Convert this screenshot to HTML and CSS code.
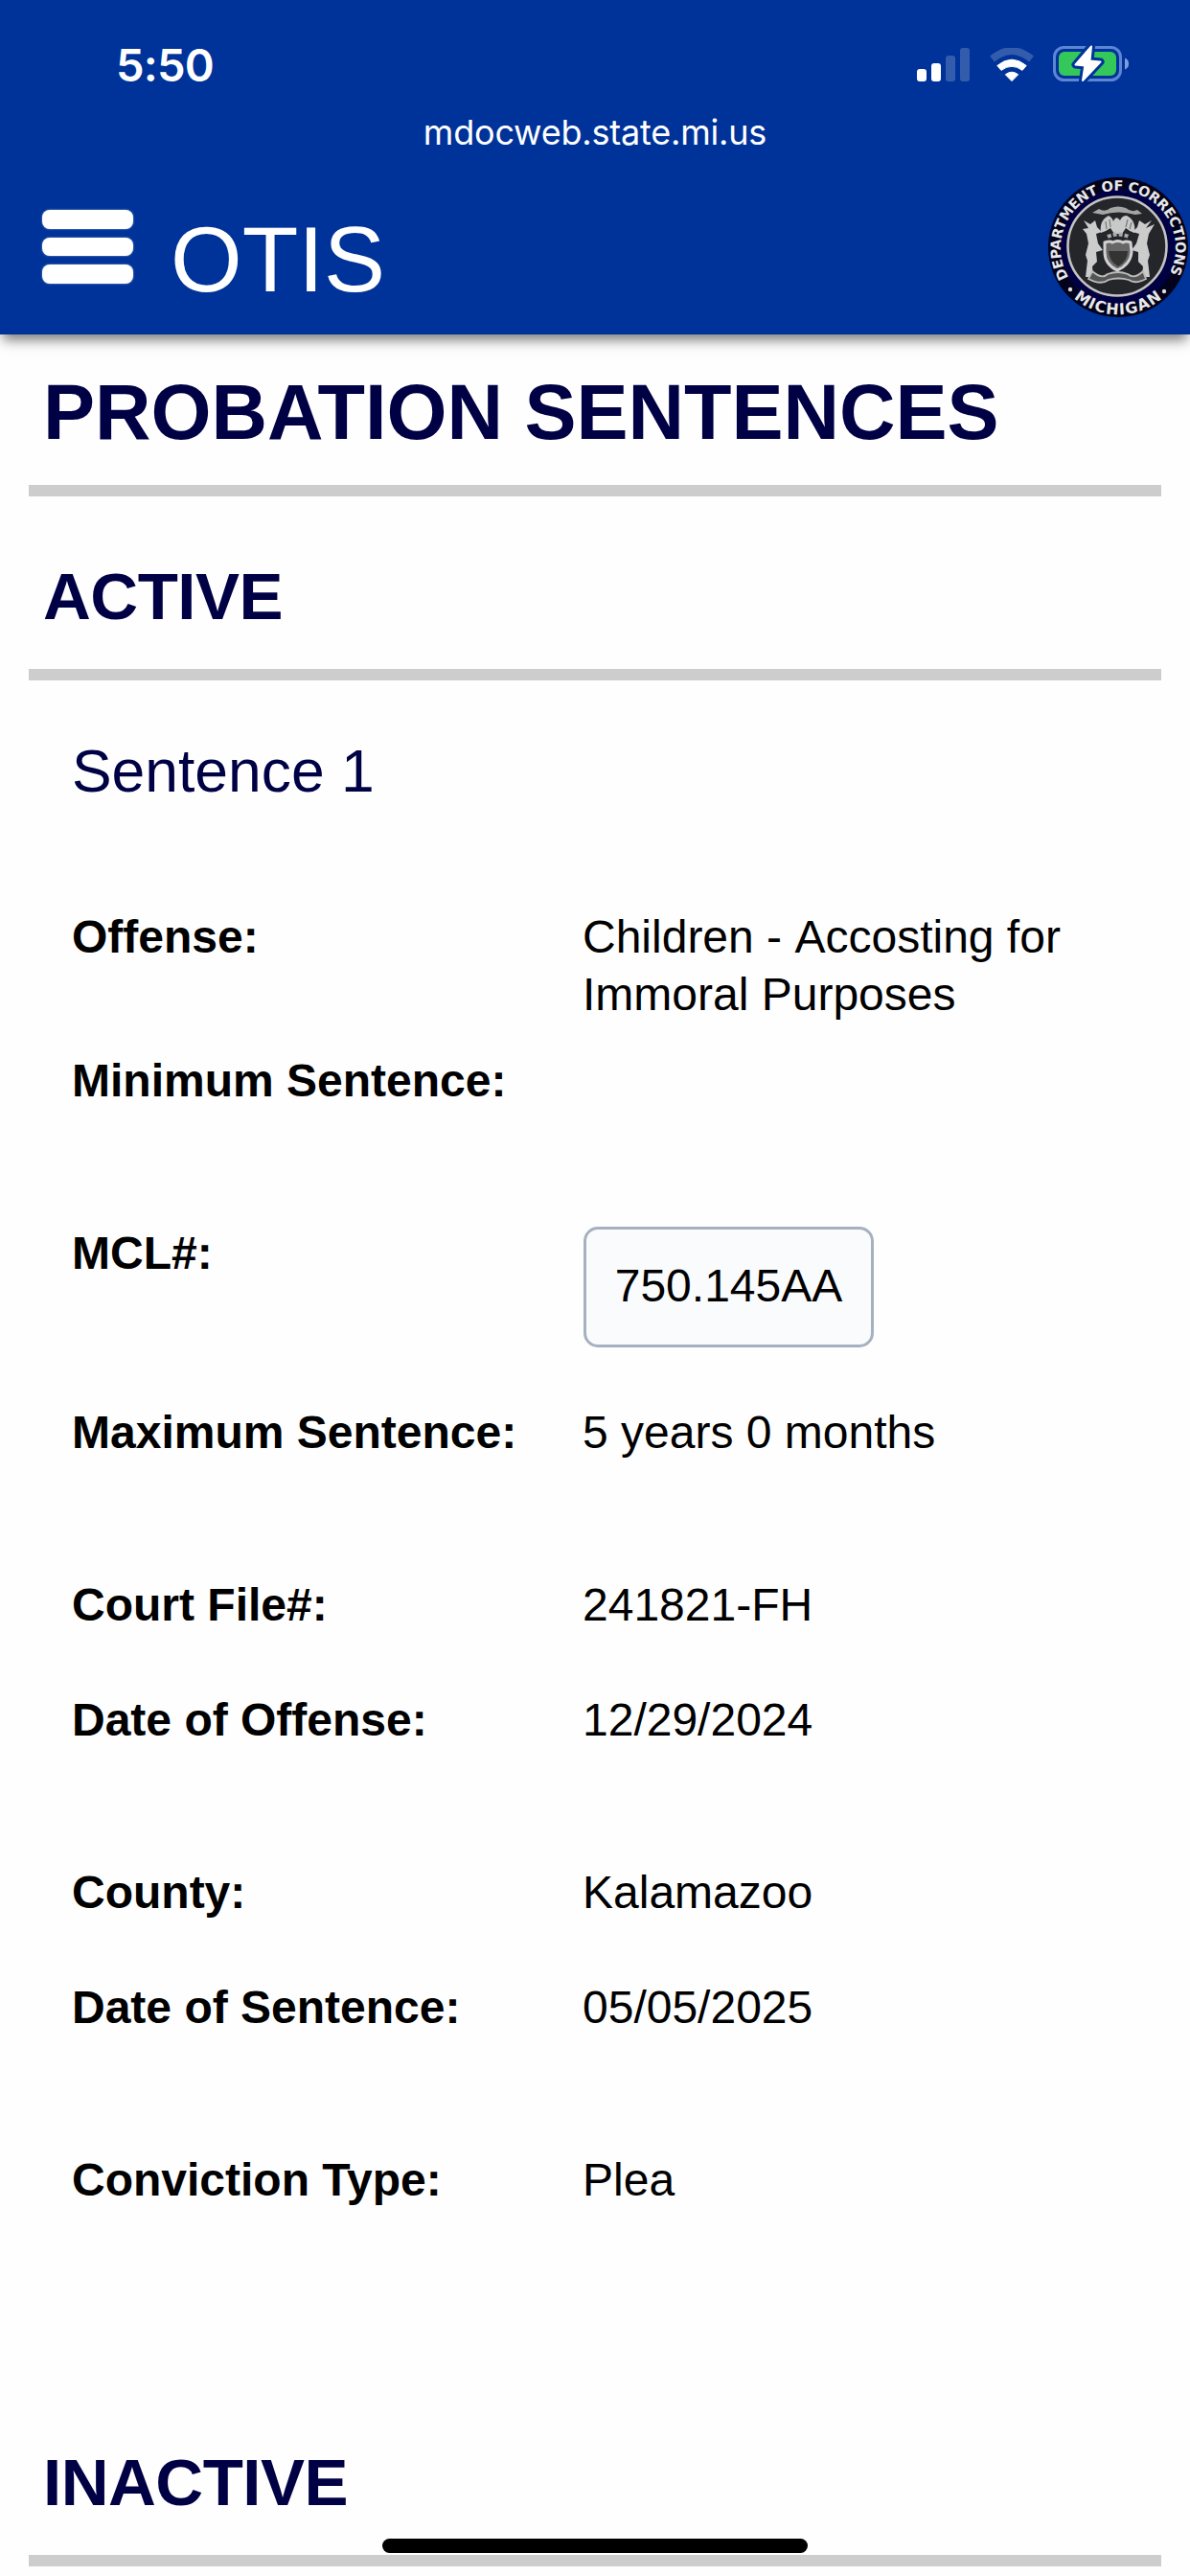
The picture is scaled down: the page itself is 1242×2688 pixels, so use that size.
FILE: index.html
```html
<!DOCTYPE html>
<html lang="en">

<head>
    <meta charset="UTF-8">
    <meta name="viewport" content="width=device-width, initial-scale=1.0">
    <title>OTIS</title>
    <link rel="stylesheet" href="styles.css">
</head>

<body>
    <header class="header">
        <div class="status">
            <span class="time">5:50</span>
            <div class="status-icons">
                <svg class="signal" width="56" height="36" viewBox="0 0 56 36">
                    <rect x="0" y="22" width="10" height="13" rx="3" fill="#fff" />
                    <rect x="15" y="16" width="10" height="19" rx="3" fill="#fff" />
                    <rect x="30" y="8" width="10" height="27" rx="3" fill="#335cad" />
                    <rect x="45" y="0" width="10" height="35" rx="3" fill="#335cad" />
                </svg>
                <svg class="wifi" width="48" height="36" viewBox="0 0 48 36">
                    <path d="M3.5 11.5 Q24 -5.5 44.5 11.5" fill="none" stroke="#335cad" stroke-width="7.5" />
                    <path d="M8.8 18.5 Q24 5.8 39.2 18.5 L35 23.4 Q24 15.2 13 23.4 Z" fill="#fff" stroke="#fff" stroke-width="1" stroke-linejoin="round" />
                    <path d="M17.3 27.8 Q24 22.6 30.7 27.8 L24 34.6 Z" fill="#fff" stroke="#fff" stroke-width="1" stroke-linejoin="round" />
                </svg>
                <svg class="battery" width="82" height="40" viewBox="0 0 82 40">
                    <rect x="1.5" y="3.5" width="69" height="34" rx="10" fill="none" stroke="#5c85d6" stroke-width="3" />
                    <rect x="6" y="8" width="60" height="25" rx="6" fill="#34c759" />
                    <path d="M75 14.5 Q79 16 79 20.5 Q79 25 75 26.5 Z" fill="#7d9ddd" />
                    <path d="M40 2 L23.5 21.5 L33.3 22.5 L31 38 L49.5 18.5 L38.5 17.5 Z" fill="#039" stroke="#039" stroke-width="8" stroke-linejoin="round" />
                    <path d="M40 2.5 L23.5 21.5 L33.3 22.5 L31 38 L49.5 18.5 L38.5 17.5 Z" fill="#fff" stroke="#fff" stroke-width="2" stroke-linejoin="round" />
                </svg>
            </div>
        </div>
        <div class="url">mdocweb.state.mi.us</div>
        <nav class="nav">
            <div class="menu">
                <span></span>
                <span></span>
                <span></span>
            </div>
            <div class="brand">OTIS</div>
            <svg class="seal" width="146" height="150" viewBox="-73 -75 146 150">
                <defs>
                    <path id="arcTop" d="M-51.5 31.5 A60 60 0 1 1 51.5 31.5" />
                    <path id="arcBottom" d="M-54 45 A70.5 70.5 0 0 0 54 45" />
                </defs>
                <circle r="73" fill="#02021c" />
                <circle r="61" fill="#000042" />
                <circle r="51.5" cx="-1" cy="-1" fill="#24262a" stroke="#c4c4c4" stroke-width="2.6" />
                <text class="seal-text"><textPath href="#arcTop" textLength="248">DEPARTMENT OF CORRECTIONS</textPath></text>
                <text class="seal-text seal-state"><textPath href="#arcBottom" startOffset="11" textLength="100">MICHIGAN</textPath></text>
                <circle cx="-50" cy="44" r="2.2" fill="#ddd" />
                <circle cx="48" cy="46" r="2.2" fill="#ddd" />
                <!-- scroll -->
                <path d="M-27 -36 L-20 -40 Q-14 -36 -8 -41 Q0 -44 8 -41 Q14 -36 20 -39 L25 -35 L18 -34 Q0 -39 -16 -34 Z" fill="#a5a5a5" />
                <!-- eagle -->
                <path d="M-18 -15 Q-20 -28 -10 -33 Q-6 -31 -5 -27 Q-2 -34 2 -28 Q4 -33 9 -33 Q19 -28 17 -15 Q11 -17 8 -20 L4 -14 L-4 -14 L-8 -20 Q-12 -17 -18 -15 Z" fill="#c9c9c9" />
                <path d="M-13 -27 L-12 -19 M-9 -29 L-8 -21 M10 -29 L8 -21 M14 -26 L12 -19" stroke="#777" stroke-width="1.2" />
                <path d="M-11 -11 Q0 -16 11 -11" fill="none" stroke="#aaa" stroke-width="4" stroke-dasharray="4 2" />
                <!-- elk and moose -->
                <path d="M-36 -28 L-29 -24 L-24 -28 L-22 -21 L-17 -16 L-23 -14 L-21 -4 L-16 3 L-23 5 L-22 15 L-27 20 L-26 31 L-34 31 L-32 14 L-34 8 L-31 -4 L-33 -14 L-37 -19 L-31 -20 Z" fill="#ccc" />
                <path d="M35 -28 L28 -24 L22 -28 L20 -21 L15 -16 L22 -14 L19 -4 L14 3 L21 5 L21 15 L26 20 L25 31 L33 31 L31 14 L33 8 L30 -4 L32 -14 L38 -24 L29 -20 Z" fill="#ccc" />
                <!-- shield -->
                <path d="M-14 -5 Q-8 -7 -6 -5 Q0 -8 5 -5 Q8 -7 13 -5 L14 5 Q13 18 -1 24 Q-14 18 -14 5 Z" fill="#666" stroke="#d0d0d0" stroke-width="3" />
                <path d="M-10 4 H10 Q10 14 0 20 Q-9 15 -10 4 Z" fill="#333" />
                <!-- ribbon -->
                <path d="M-27 25 Q-17 34 -11 28 Q0 24 10 28 Q17 34 26 25 L29 33 Q18 39 11 34 Q0 31 -10 34 Q-18 40 -31 33 Z" fill="#555" stroke="#bbb" stroke-width="1.8" />
            </svg>
        </nav>
    </header>

    <main class="content">
        <h1>PROBATION SENTENCES</h1>
        <h2>ACTIVE</h2>
        <section class="sentence">
            <h3>Sentence 1</h3>
            <dl>
                <div class="row row-offense">
                    <dt>Offense:</dt>
                    <dd>Children - Accosting for Immoral Purposes</dd>
                </div>
                <div class="row group-end">
                    <dt>Minimum Sentence:</dt>
                    <dd></dd>
                </div>
                <div class="row row-mcl">
                    <dt>MCL#:</dt>
                    <dd><button class="mcl">750.145AA</button></dd>
                </div>
                <div class="row group-end">
                    <dt>Maximum Sentence:</dt>
                    <dd>5 years 0 months</dd>
                </div>
                <div class="row">
                    <dt>Court File#:</dt>
                    <dd>241821-FH</dd>
                </div>
                <div class="row group-end">
                    <dt>Date of Offense:</dt>
                    <dd>12/29/2024</dd>
                </div>
                <div class="row">
                    <dt>County:</dt>
                    <dd>Kalamazoo</dd>
                </div>
                <div class="row group-end">
                    <dt>Date of Sentence:</dt>
                    <dd>05/05/2025</dd>
                </div>
                <div class="row">
                    <dt>Conviction Type:</dt>
                    <dd>Plea</dd>
                </div>
            </dl>
        </section>
        <h2>INACTIVE</h2>
    </main>
    <div class="home-indicator"></div>
</body>

</html>
```

FILE: styles.css
```css
* {
    box-sizing: border-box;
}

body {
    margin: 0;
    height: 2688px;
    overflow: hidden;
    position: relative;
    background-color: #fefefe;
    color: #000;
    font-family: "Liberation Sans", Arial, sans-serif;
    font-size: 48px;
    line-height: 60px;
}

.header {
    height: 349px;
    background-color: #003399;
    color: #fff;
    box-shadow: 0 9px 12px -3px rgba(0, 0, 0, 0.5);
}

.status {
    display: flex;
    justify-content: space-between;
    height: 116px;
    padding: 20px 61px 0 121px;
}

.time {
    font-family: Inter, sans-serif;
    font-weight: 600;
    font-size: 47px;
    line-height: 96px;
    letter-spacing: -0.8px;
}

.status-icons {
    display: flex;
    align-items: flex-start;
    padding-top: 30px;
}

.wifi {
    margin-left: 19px;
}

.battery {
    margin: -4px 0 0 19px;
}

.url {
    font-family: Inter, sans-serif;
    font-size: 36px;
    line-height: 44px;
    text-align: center;
    letter-spacing: -0.2px;
}

.nav {
    display: flex;
    align-items: flex-start;
    padding: 23px 2px 0 44px;
}

.menu {
    display: flex;
    flex-direction: column;
    gap: 9px;
    width: 95px;
    margin-top: 36px;
}

.menu span {
    height: 19.5px;
    border-radius: 8px;
    background-color: #fff;
    box-shadow: 0 0 2px rgba(255, 255, 255, 0.6);
}

.brand {
    margin: 33px auto 0 39px;
    font-size: 96px;
    line-height: 110px;
}

.seal-text {
    font-family: "DejaVu Sans", sans-serif;
    font-weight: bold;
    font-size: 14.5px;
    fill: #e8e8e8;
}

.seal-state {
    font-size: 16px;
}

.content {
    padding: 0 30px;
}

h1,
h2 {
    margin: 0;
    border-bottom: 12px solid #cdcdcd;
    color: #000045;
}

h1 {
    padding: 36px 15px 31px;
    font-size: 81px;
    line-height: 90px;
}

h2 {
    padding: 67px 15px 37px;
    font-size: 69px;
    line-height: 76px;
    letter-spacing: -0.5px;
}

.sentence {
    padding: 60px 45px 181px;
}

h3 {
    margin: 0 0 108px;
    color: #000045;
    font-size: 62.4px;
    font-weight: normal;
    line-height: 70px;
}

dl {
    margin: 0;
}

.row {
    display: grid;
    grid-template-columns: 533px 1fr;
    min-height: 60px;
    margin-bottom: 60px;
}

.row:last-child {
    margin-bottom: 0;
}

.row-offense {
    margin-bottom: 30px;
}

.group-end {
    margin-bottom: 120px;
}

.row-mcl {
    margin-bottom: 59px;
}

dt {
    font-weight: bold;
}

dd {
    margin: 0;
    font-kerning: none;
}

.mcl {
    display: block;
    width: 303px;
    height: 126px;
    margin: 2px 0 0 1px;
    padding: 0 0 2px;
    border: 3px solid #a6b1c0;
    border-radius: 15px;
    background-color: #fafbfc;
    color: #000;
    font: inherit;
}

.home-indicator {
    position: absolute;
    left: 399px;
    bottom: 24px;
    width: 444px;
    height: 15px;
    border-radius: 8px;
    background-color: #000;
}
```
